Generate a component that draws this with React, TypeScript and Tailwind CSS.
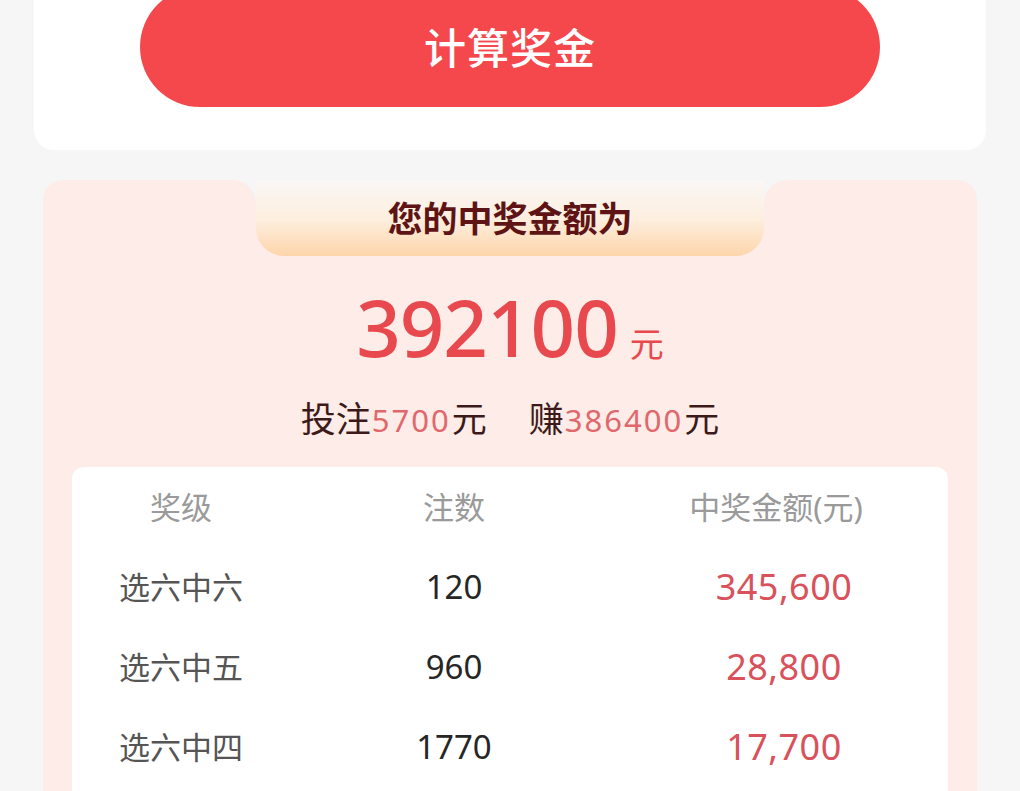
import React from "react";

const FONT = { fontFamily: '"Noto Sans","Noto Sans CJK SC",sans-serif' };

const rows = [
  { name: "选六中六", count: "120", amount: "345,600" },
  { name: "选六中五", count: "960", amount: "28,800" },
  { name: "选六中四", count: "1770", amount: "17,700" },
];

export default function App() {
  return (
    <div className="min-h-screen overflow-hidden bg-[#f6f6f6]" style={FONT}>
      <div className="mx-[34px] -mt-[40px] flex justify-center rounded-[20px] bg-white pt-[27px] pb-[43px]">
        <button className="h-[120px] w-[740px] rounded-full bg-[#f5484c] text-[42px] font-medium tracking-[1px] text-white">
          计算奖金
        </button>
      </div>

      <div className="mx-[43px] mt-[30px]">
        <div className="flex h-[76px]">
          <div className="flex-1 rounded-tl-[20px] rounded-tr-[24px] bg-[#fdece7]" />
          <div className="w-[508px] bg-[#fdece7]">
            <div className="flex h-full items-center justify-center rounded-b-[28px] bg-gradient-to-b from-[#faf7f5] via-[#fdefe0] to-[#fdd5aa] pt-[2px] text-[35px] font-bold text-[#5e1414]">
              您的中奖金额为
            </div>
          </div>
          <div className="flex-1 rounded-tl-[24px] rounded-tr-[20px] bg-[#fdece7]" />
        </div>

        <div className="bg-[#fdece7] px-[29px] pt-[26px] pb-[40px]">
          <div className="flex h-[90px] items-baseline justify-center text-[#e8494e]">
            <span className="text-[78px] leading-[90px] font-medium tracking-[-1px]">392100</span>
            <span className="ml-[12px] text-[34px]">元</span>
          </div>

          <div className="mt-[24px] flex h-[46px] items-baseline justify-center text-[35px] leading-[46px] text-[#3d1a1a]">
            <span>投注</span>
            <span className="px-[1px] text-[31px] tracking-[2px] text-[#e0686d]">5700</span>
            <span>元</span>
            <span className="ml-[42px]">赚</span>
            <span className="px-[1px] text-[31px] tracking-[2px] text-[#e0686d]">386400</span>
            <span>元</span>
          </div>

          <div className="mt-[25px] rounded-[12px] bg-white pr-[14px] pb-[40px]">
            <div className="grid h-[80px] grid-cols-[218px_328px_1fr] items-center text-[31px] text-[#9a9a9a]">
              <div className="text-center">奖级</div>
              <div className="text-center">注数</div>
              <div className="text-center">中奖金额(元)</div>
            </div>
            {rows.map((r) => (
              <div
                key={r.name}
                className="grid h-[80px] grid-cols-[218px_328px_1fr] items-center"
              >
                <div className="text-center text-[31px] text-[#555555]">{r.name}</div>
                <div className="text-center text-[33px] text-[#262626]">{r.count}</div>
                <div className="pl-[16px] text-center text-[36px] tracking-[0.5px] text-[#d9515a]">{r.amount}</div>
              </div>
            ))}
          </div>
        </div>
      </div>
    </div>
  );
}
